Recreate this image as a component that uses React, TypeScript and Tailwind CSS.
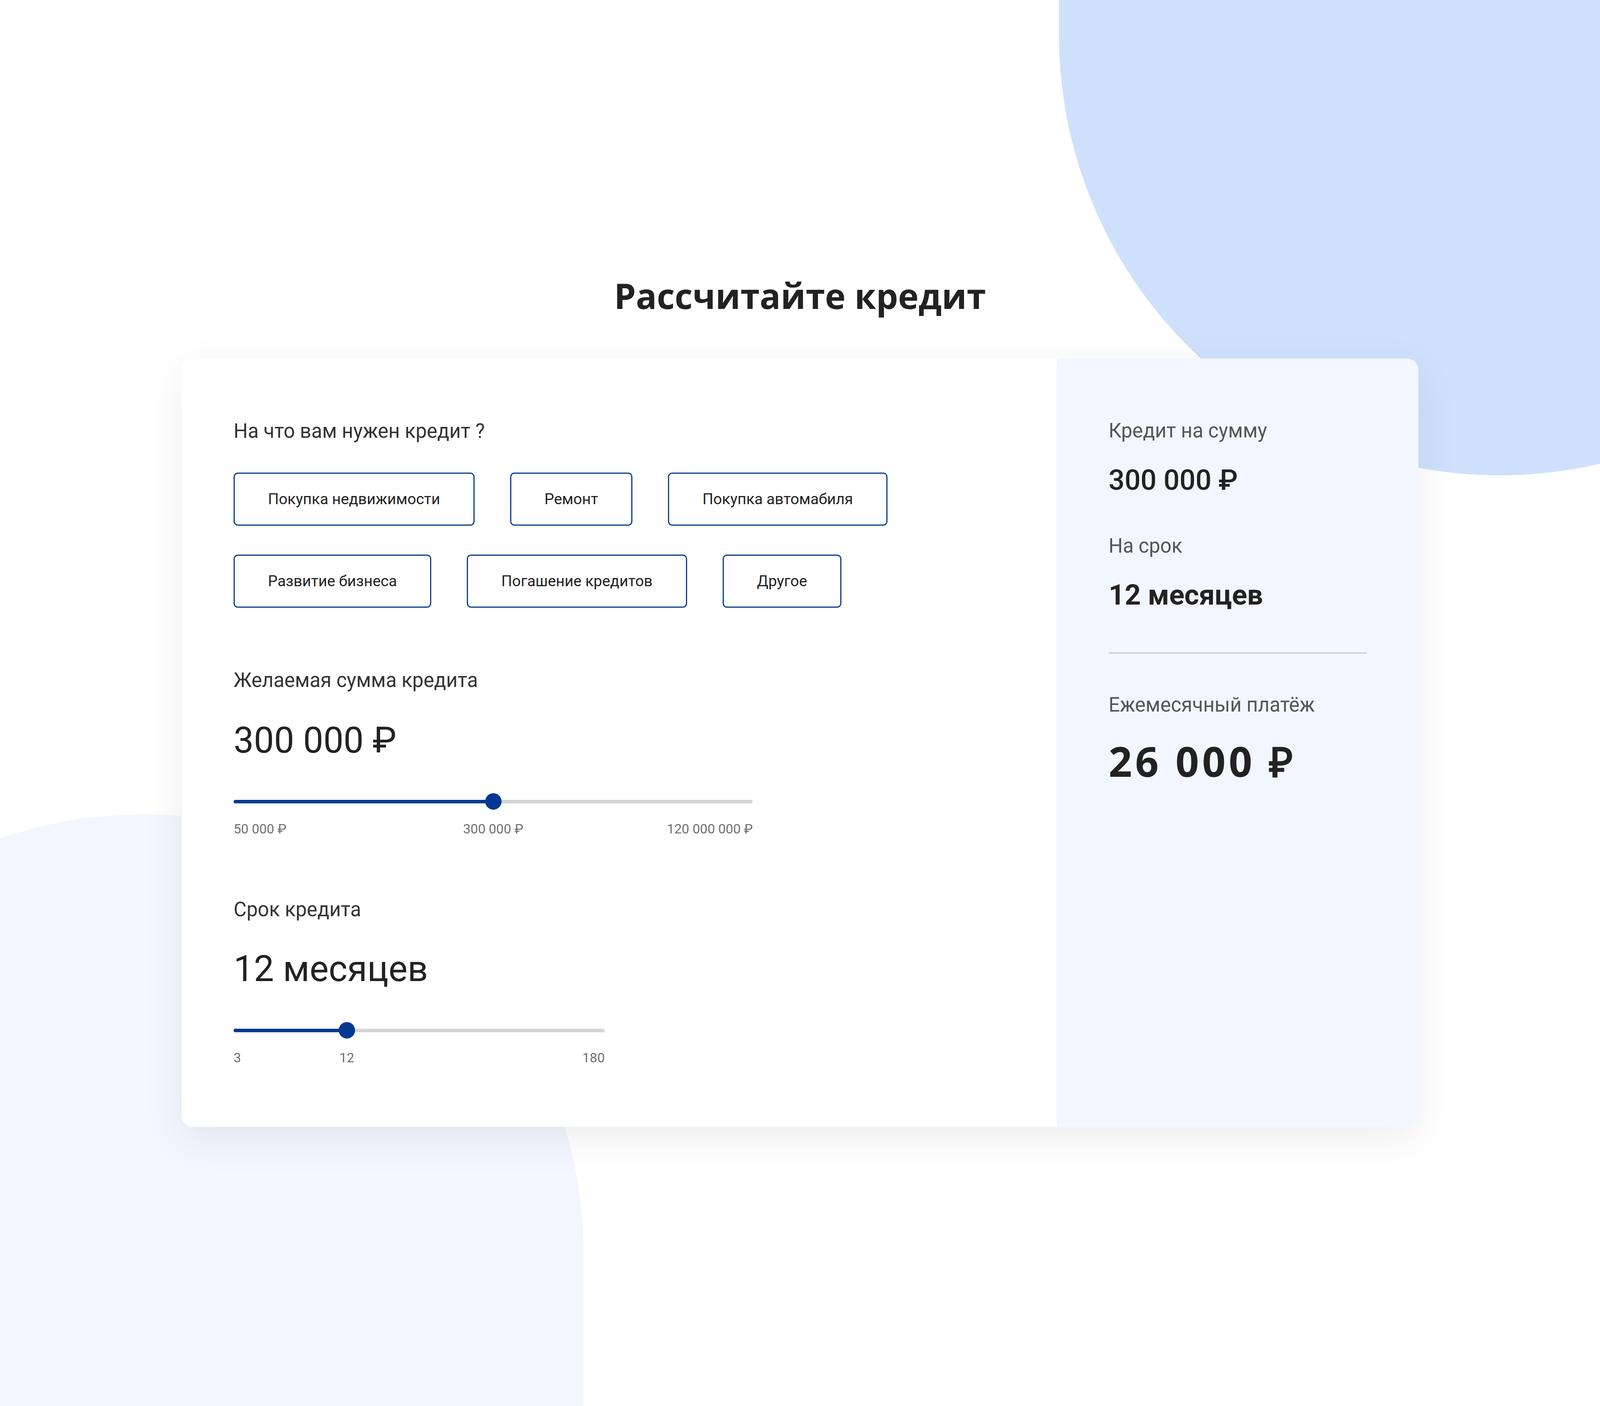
import React from 'react';

const purposes = [
  ['Покупка недвижимости', 'Ремонт', 'Покупка автомабиля'],
  ['Развитие бизнеса', 'Погашение кредитов', 'Другое'],
];

interface SliderProps {
  width: string;
  percent: number;
  min: string;
  mid: string;
  max: string;
}

function Slider({ width, percent, min, mid, max }: SliderProps) {
  return (
    <div className={width}>
      <div className="relative h-[42px]">
        <div className="absolute left-0 right-0 top-[16.5px] h-[9px] rounded-full bg-[#d4d4d4]" />
        <div
          className="absolute left-0 top-[16.5px] h-[9px] rounded-full bg-[#003893]"
          style={{ width: `${percent}%` }}
        />
        <div
          className="absolute top-0 h-[42px] w-[42px] -translate-x-1/2 rounded-full bg-[#003893]"
          style={{ left: `${percent}%` }}
        />
      </div>
      <div className="relative mt-[29px] h-[41px] text-[34px] leading-[41px] text-[#707070]">
        <span className="absolute left-0 top-0">{min}</span>
        <span className="absolute top-0 -translate-x-1/2 whitespace-nowrap" style={{ left: `${percent}%` }}>
          {mid}
        </span>
        <span className="absolute right-0 top-0">{max}</span>
      </div>
    </div>
  );
}

export default function App() {
  return (
    <div className="relative h-[3600px] w-full overflow-hidden bg-white font-['Roboto',sans-serif]">
      {/* фоновые круги */}
      <div className="absolute left-[2711px] top-[-1427px] h-[2644px] w-[2256px] rounded-full bg-[#cfe0fd]" />
      <div className="absolute left-[-759px] top-[2085px] h-[2640px] w-[2253px] rounded-full bg-[#f2f6fe]" />

      <div className="relative flex flex-col items-center pt-[712px]">
        <h1 className="font-['Open_Sans',sans-serif] text-[89px] font-bold leading-none text-[#222]">
          Рассчитайте кредит
        </h1>

        <div className="mt-[117px] flex w-[3166px] overflow-hidden rounded-[28px] shadow-[0_30px_110px_rgba(0,0,0,0.07)]">
          {/* Калькулятор */}
          <div className="w-[2241px] bg-white pb-[156px] pl-[133px] pt-[155px]">
            <p className="text-[51px] leading-[61px] text-[#333]">На что вам нужен кредит ?</p>

            <div className="mt-[76px] flex flex-col gap-[74px]">
              {purposes.map((row, i) => (
                <div key={i} className="flex gap-[91px]">
                  {row.map((p) => (
                    <button
                      key={p}
                      className="h-[136px] rounded-[11px] border-[3px] border-[#0a3d91] bg-white px-[85px] text-[39px] text-[#222]"
                    >
                      {p}
                    </button>
                  ))}
                </div>
              ))}
            </div>

            <p className="mt-[155px] text-[51px] leading-[61px] text-[#333]">Желаемая сумма кредита</p>
            <p className="mt-[69px] text-[92px] leading-[110px] text-[#222]">300 000 ₽</p>
            <div className="mt-[80px]">
              <Slider width="w-[1329px]" percent={50} min="50 000 ₽" mid="300 000 ₽" max="120 000 000 ₽" />
            </div>

            <p className="mt-[155px] text-[51px] leading-[61px] text-[#333]">Срок кредита</p>
            <p className="mt-[67px] text-[92px] leading-[110px] text-[#222]">12 месяцев</p>
            <div className="mt-[81px]">
              <Slider width="w-[950px]" percent={30.5} min="3" mid="12" max="180" />
            </div>
          </div>

          {/* Итог */}
          <div className="flex-1 bg-[#f2f7ff] px-[132px] pt-[154px]">
            <p className="text-[51px] leading-[61px] text-[#555]">Кредит на сумму</p>
            <p className="mt-[54px] text-[72px] font-medium leading-[86px] text-[#222]">300 000 ₽</p>
            <p className="mt-[94px] text-[51px] leading-[61px] text-[#555]">На срок</p>
            <p className="mt-[53px] text-[72px] font-bold leading-[86px] text-[#222]">12 месяцев</p>
            <div className="mt-[103px] h-[4px] bg-[#d4d4d4]" />
            <p className="mt-[100px] text-[51px] leading-[61px] text-[#555]">Ежемесячный платёж</p>
            <p className="mt-[61px] font-['Open_Sans',sans-serif] text-[105px] font-bold leading-none tracking-[8px] text-[#222]">
              26 000 ₽
            </p>
          </div>
        </div>
      </div>
    </div>
  );
}
